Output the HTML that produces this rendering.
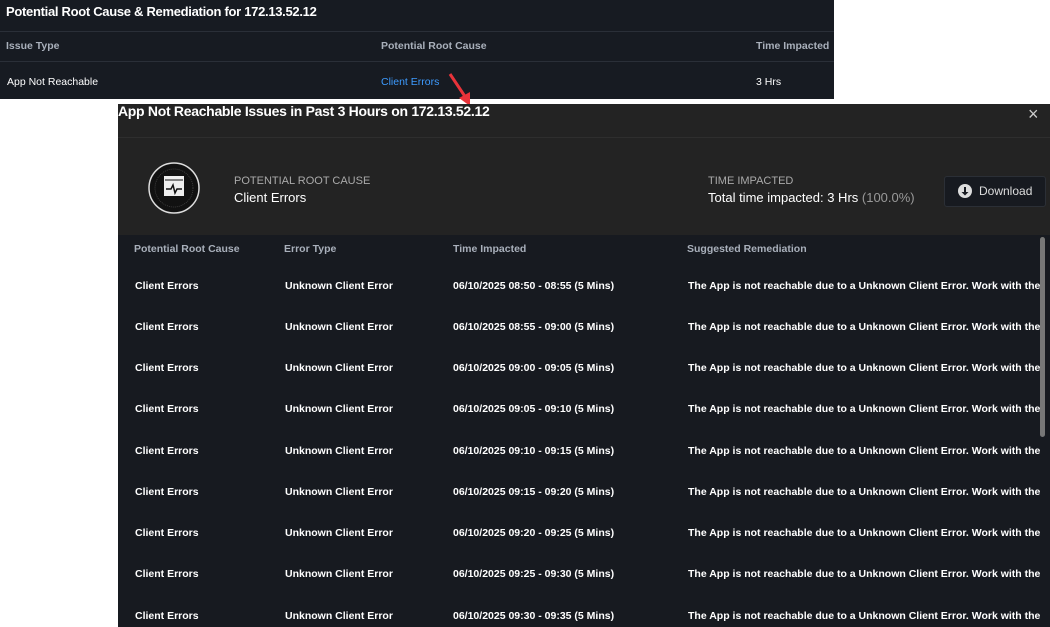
<!DOCTYPE html>
<html><head><style>
body{margin:0;width:1050px;height:627px;background:#fff;position:relative;overflow:hidden;font-family:"Liberation Sans",sans-serif;}
.a{position:absolute;white-space:nowrap;}
#top{position:absolute;left:0;top:0;width:834px;height:99px;background:#171b22;}
.line{position:absolute;height:1px;background:#2a2f38;}
#modal{position:absolute;left:118px;top:104px;width:932px;height:523px;background:#171a20;}
#mh{position:absolute;left:0;top:0;width:932px;height:33px;background:#232323;border-bottom:1px solid #2e2e2e;}
#sum{position:absolute;left:0;top:34px;width:932px;height:97px;background:#232323;}
.h{font-size:10.5px;font-weight:bold;color:#a9b0bb;}
.c{font-size:10.5px;font-weight:bold;color:#fff;}
</style></head><body>
<div id="top">
<div class="a" style="left:6px;top:4px;font-size:13px;letter-spacing:-0.3px;font-weight:bold;color:#fff;">Potential Root Cause &amp; Remediation for 172.13.52.12</div>
<div class="line" style="left:0;top:31px;width:834px;"></div>
<div class="a h" style="left:6px;top:40px;">Issue Type</div>
<div class="a h" style="left:381px;top:40px;">Potential Root Cause</div>
<div class="a h" style="left:756px;top:40px;">Time Impacted</div>
<div class="line" style="left:0;top:61px;width:834px;"></div>
<div class="a c" style="left:7px;top:76px;font-weight:normal;">App Not Reachable</div>
<div class="a" style="left:381px;top:76px;font-size:10.5px;color:#3d9bff;">Client Errors</div>
<div class="a c" style="left:756px;top:76px;font-weight:normal;">3 Hrs</div>
</div>
<svg class="a" style="left:446px;top:70px;" width="30" height="40"><line x1="4" y1="4" x2="20" y2="28" stroke="#e8333a" stroke-width="3"/><polygon points="24,36 13,28 24,22" fill="#e8333a"/></svg>
<div id="modal">
<div id="mh"></div>
<div class="a" style="left:0;top:-1px;font-size:14px;letter-spacing:-0.3px;font-weight:bold;color:#fff;">App Not Reachable Issues in Past 3 Hours on 172.13.52.12</div>
<div class="a" style="left:910px;top:0px;font-size:18px;color:#ccc;">×</div>
<div id="sum">
<svg class="a" style="left:29px;top:23px;" width="54" height="54"><circle cx="27" cy="27" r="25" fill="#111" stroke="#ddd" stroke-width="1.5"/><circle cx="27" cy="27" r="19" fill="none" stroke="#444" stroke-width="0.8" stroke-dasharray="1 1"/><rect x="17" y="15" width="20" height="20" fill="#eee"/><line x1="18" y1="19" x2="36" y2="19" stroke="#111"/><polyline points="19,28 24,28 26,24 28,32 30,28 35,28" fill="none" stroke="#111" stroke-width="1.5"/></svg>
<div class="a" style="left:116px;top:37px;font-size:11px;color:#aaa;">POTENTIAL ROOT CAUSE</div>
<div class="a" style="left:116px;top:52px;font-size:13px;color:#fff;">Client Errors</div>
<div class="a" style="left:590px;top:37px;font-size:11px;color:#aaa;">TIME IMPACTED</div>
<div class="a" style="left:590px;top:52px;font-size:13px;color:#fff;">Total time impacted: 3 Hrs <span style="color:#999;">(100.0%)</span></div>
<div class="a" style="left:826px;top:38px;width:100px;height:29px;background:#171a20;border:1px solid #2b2f36;border-radius:3px;"></div>
<svg class="a" style="left:840px;top:46px;" width="14" height="14"><circle cx="7" cy="7" r="7" fill="#ddd"/><line x1="7" y1="3" x2="7" y2="9" stroke="#171a20" stroke-width="2"/><polygon points="3.5,8 10.5,8 7,11.5" fill="#171a20"/></svg>
<div class="a" style="left:861px;top:46px;font-size:12px;color:#ddd;">Download</div>
</div>
<div class="a h" style="left:16px;top:139px;">Potential Root Cause</div>
<div class="a h" style="left:166px;top:139px;">Error Type</div>
<div class="a h" style="left:335px;top:139px;">Time Impacted</div>
<div class="a h" style="left:569px;top:139px;">Suggested Remediation</div>
<div class="a" style="left:922px;top:133px;width:5px;height:200px;background:#777;border-radius:3px;"></div>
<div id="rows"></div>
</div>
<script>
var t=["08:50 - 08:55","08:55 - 09:00","09:00 - 09:05","09:05 - 09:10","09:10 - 09:15","09:15 - 09:20","09:20 - 09:25","09:25 - 09:30","09:30 - 09:35"];
var ys=[176,217,258,299,341,382,423,464,506],h="";
for(var i=0;i<9;i++){var y=ys[i];
h+='<div class="a c" style="left:17px;top:'+y+'px;">Client Errors</div><div class="a c" style="left:167px;top:'+y+'px;">Unknown Client Error</div><div class="a c" style="left:335px;top:'+y+'px;">06/10/2025 '+t[i]+' (5 Mins)</div><div class="a c" style="left:570px;top:'+y+'px;width:352px;overflow:hidden;">The App is not reachable due to a Unknown Client Error. Work with the app owner</div>';}
document.getElementById('rows').innerHTML=h;
</script>
</body></html>
